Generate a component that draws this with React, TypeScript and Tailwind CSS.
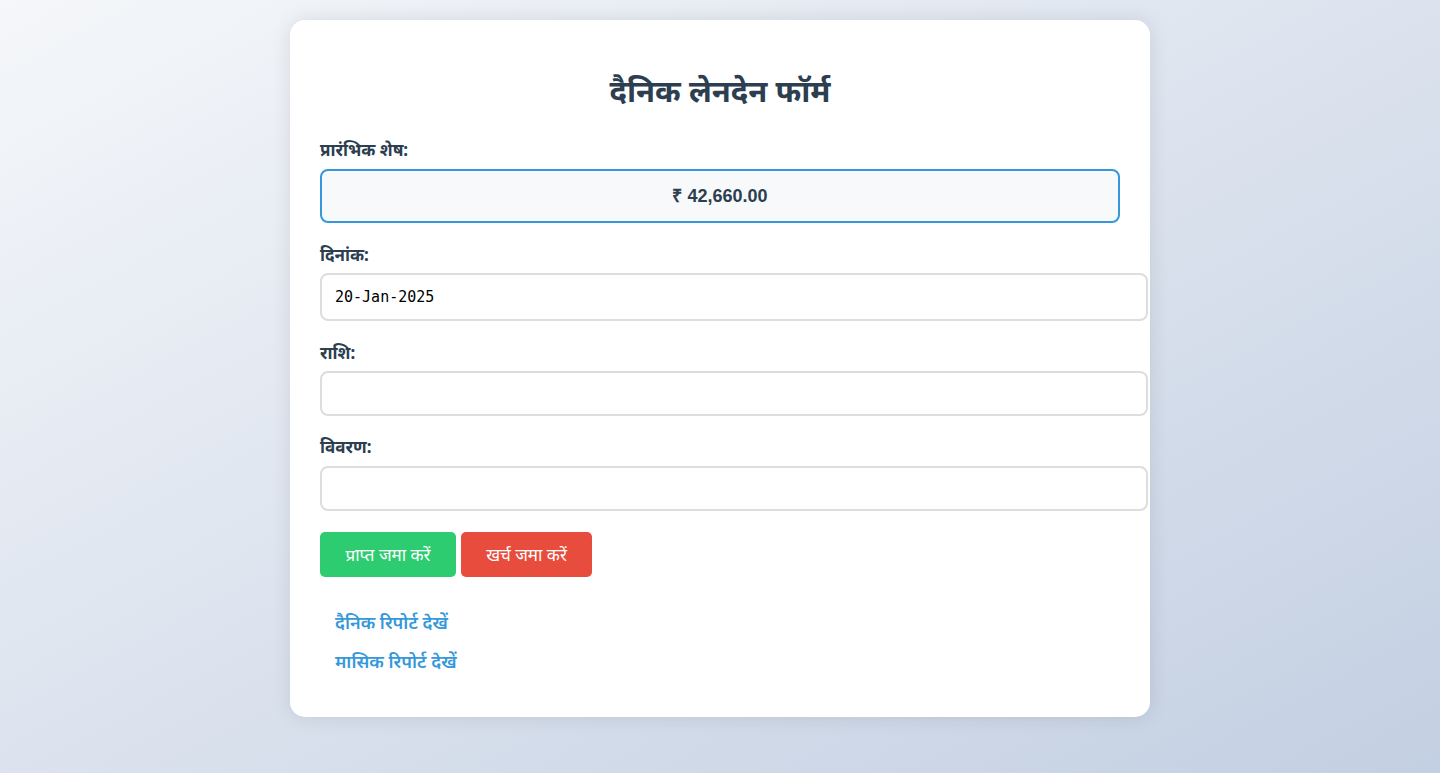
import React, { useState } from 'react'

export default function App() {
  const [date, setDate] = useState('20-Jan-2025')
  const [amount, setAmount] = useState('')
  const [desc, setDesc] = useState('')

  return (
    <div
      className="min-h-[773px] w-full bg-gradient-to-br from-[#f5f7fa] to-[#c3cfe2] pt-5 pb-14"
      style={{ fontFamily: '"Noto Sans", "Liberation Sans", sans-serif' }}
    >
      <div className="mx-auto w-[860px] rounded-[15px] bg-white px-[30px] pt-[30px] pb-[42px] shadow-[0_0_20px_rgba(0,0,0,0.1)]">
        <h1 className="mt-4 mb-6 text-center text-[31px] leading-[48px] font-bold text-[#2c3e50]">
          दैनिक लेनदेन फॉर्म
        </h1>

        {/* Opening balance */}
        <label className="block text-[17px] leading-6 font-bold text-[#2c3e50]">प्रारंभिक शेष:</label>
        <div
          className="mt-[7px] flex h-[54px] w-[800px] items-center justify-center rounded-lg border-2 border-[#3498db] bg-[#f8f9fa] text-[18px] font-bold text-[#2c3e50]"
          style={{ fontFamily: '"Liberation Sans", Arial, sans-serif' }}
        >
          ₹ 42,660.00
        </div>

        <label className="mt-5 block text-[17px] leading-6 font-bold text-[#2c3e50]">दिनांक:</label>
        <input
          value={date}
          onChange={e => setDate(e.target.value)}
          className="mt-[6px] block h-12 w-[828px] rounded-lg border-2 border-[#ddd] px-[13px] text-[15px] text-black outline-none"
          style={{ fontFamily: '"DejaVu Sans Mono", monospace' }}
        />

        <label className="mt-5 block text-[17px] leading-6 font-bold text-[#2c3e50]">राशि:</label>
        <input
          value={amount}
          onChange={e => setAmount(e.target.value)}
          className="mt-[6px] block h-[45px] w-[828px] rounded-lg border-2 border-[#ddd] px-3 text-[16px] outline-none"
        />

        <label className="mt-[19px] block text-[17px] leading-6 font-bold text-[#2c3e50]">विवरण:</label>
        <input
          value={desc}
          onChange={e => setDesc(e.target.value)}
          className="mt-[7px] block h-[45px] w-[828px] rounded-lg border-2 border-[#ddd] px-3 text-[16px] outline-none"
        />

        <div className="mt-[21px] flex gap-[5px]">
          <button className="h-[45px] w-[136px] rounded-[5px] bg-[#2ecc71] text-[17px] text-white">
            प्राप्त जमा करें
          </button>
          <button className="h-[45px] w-[131px] rounded-[5px] bg-[#e74c3c] text-[17px] text-white">
            खर्च जमा करें
          </button>
        </div>

        <div className="mt-[32px] flex flex-col gap-[12px] px-[15px]">
          <a href="#" className="text-[18px] leading-[27px] font-semibold text-[#3498db]">
            दैनिक रिपोर्ट देखें
          </a>
          <a href="#" className="text-[18px] leading-[27px] font-semibold text-[#3498db]">
            मासिक रिपोर्ट देखें
          </a>
        </div>
      </div>
    </div>
  )
}
